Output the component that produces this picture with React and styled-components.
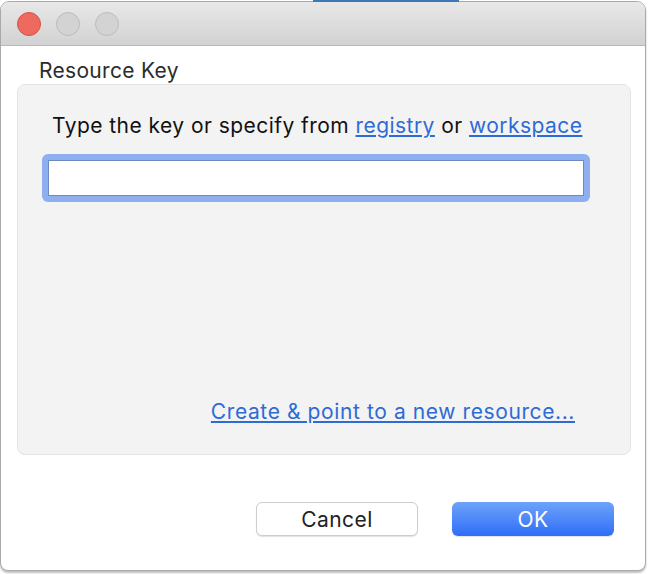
import React from "react";
import styled, { createGlobalStyle } from "styled-components";

const Global = createGlobalStyle`
  html, body { margin: 0; padding: 0; background: #ffffff; }
  body { font-family: Inter, "Noto Sans", sans-serif; width: 649px; height: 574px; overflow: hidden; }
`;

const Stage = styled.div`
  width: 649px;
  height: 574px;
  padding: 1px 3px 3px 0;
  box-sizing: border-box;
  position: relative;
  background: #ffffff;
`;

const BackdropBar = styled.div`
  position: absolute;
  top: 0;
  left: 313px;
  width: 146px;
  height: 2px;
  background: #3d78b8;
`;

const Window = styled.div`
  width: 646px;
  height: 570px;
  box-sizing: border-box;
  border: 1px solid #a9a9a9;
  border-radius: 9px 9px 8px 8px;
  background: #ffffff;
  display: flex;
  flex-direction: column;
  overflow: hidden;
  box-shadow: 0 2px 2px rgba(0, 0, 0, 0.25);
`;

const TitleBar = styled.div`
  height: 43px;
  flex: none;
  background: linear-gradient(#e8e8e8, #d2d2d2);
  border-bottom: 1px solid #b9b9b9;
  display: flex;
  align-items: center;
  gap: 15px;
  padding: 0 0 0 16px;
`;

const Light = styled.span`
  width: 24px;
  height: 24px;
  border-radius: 50%;
  box-sizing: border-box;
  background: ${(p) => (p.$red ? "#ee6a5f" : "#d3d3d3")};
  border: 1px solid ${(p) => (p.$red ? "#d65246" : "#bcbcbc")};
`;

const Body = styled.div`
  flex: 1;
  display: flex;
  flex-direction: column;
  padding: 13px 14px 0 16px;
`;

const GroupLabel = styled.div`
  font-size: 21px;
  letter-spacing: 0.3px;
  color: #2c2c2c;
  padding-left: 22px;
  line-height: 24px;
  height: 22px;
`;

const Panel = styled.div`
  margin-top: 3px;
  height: 371px;
  box-sizing: border-box;
  background: #f3f3f3;
  border: 1px solid #e4e4e4;
  border-radius: 8px;
  display: flex;
  flex-direction: column;
  padding: 28px 40px 0 24px;
`;

const Prompt = styled.div`
  font-size: 21px;
  letter-spacing: 0.45px;
  color: #111;
  padding-left: 10px;
  line-height: 26px;
`;

const Link = styled.a`
  color: #2d6bd6;
  text-decoration: underline;
  text-decoration-thickness: 2px;
  text-underline-offset: 2px;
  cursor: pointer;
`;

const FieldWrap = styled.div`
  margin-top: 15px;
  width: 548px;
  height: 48px;
  box-sizing: border-box;
  border-radius: 6px;
  background: #8eaff0;
  padding: 6px;
  display: flex;
`;

const Inner = styled.input`
  flex: 1;
  border: 1px solid #6f88bf;
  background: #fff;
  outline: none;
  margin: 0;
  padding: 0 8px;
  font-size: 18px;
  font-family: inherit;
  min-width: 0;
`;

const Spacer = styled.div`
  flex: 1;
`;

const CreateLink = styled(Link)`
  align-self: flex-end;
  margin-right: 15px;
  font-size: 21px;
  letter-spacing: 0.6px;
  line-height: 26px;
  margin-bottom: 29px;
`;

const Actions = styled.div`
  display: flex;
  justify-content: flex-end;
  gap: 34px;
  padding: 47px 17px 0 0;
`;

const Button = styled.button`
  width: 162px;
  height: 34px;
  border-radius: 6px;
  font-family: inherit;
  font-size: 21px;
  letter-spacing: 0.4px;
  box-sizing: border-box;
  cursor: pointer;
  padding: 0;
  border: ${(p) => (p.$primary ? "none" : "1px solid #cdcdcd")};
  color: ${(p) => (p.$primary ? "#ffffff" : "#222")};
  background: ${(p) =>
    p.$primary ? "linear-gradient(#6ea2fa, #2f6ef6)" : "#ffffff"};
  box-shadow: 0 1px 1px rgba(0, 0, 0, 0.12);
`;

export default function App() {
  return (
    <>
      <Global />
      <Stage>
        <BackdropBar />
        <Window>
          <TitleBar>
            <Light $red />
            <Light />
            <Light />
          </TitleBar>
          <Body>
            <GroupLabel>Resource Key</GroupLabel>
            <Panel>
              <Prompt>
                Type the key or specify from <Link>registry</Link> or{" "}
                <Link>workspace</Link>
              </Prompt>
              <FieldWrap>
                <Inner type="text" />
              </FieldWrap>
              <Spacer />
              <CreateLink>Create &amp; point to a new resource...</CreateLink>
            </Panel>
            <Actions>
              <Button>Cancel</Button>
              <Button $primary>OK</Button>
            </Actions>
          </Body>
        </Window>
      </Stage>
    </>
  );
}
